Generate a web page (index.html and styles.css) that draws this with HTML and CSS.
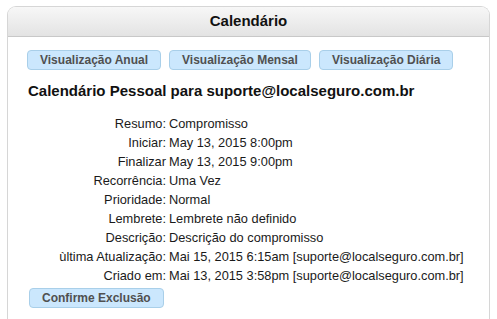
FILE: index.html
```html
<!DOCTYPE html>
<html lang="pt">
<head>
  <meta charset="UTF-8">
  <title>Calendário</title>
  <link rel="stylesheet" href="styles.css">
</head>
<body>

  <div class="panel">
    <div class="panel-header">Calendário</div>
    <div class="panel-body">
      <div class="view-buttons">
        <button class="btn">Visualização Anual</button>
        <button class="btn">Visualização Mensal</button>
        <button class="btn">Visualização Diária</button>
      </div>

      <h2 class="title">Calendário Pessoal para suporte@localseguro.com.br</h2>

      <table class="details">
        <tr><td class="key">Resumo:</td><td>Compromisso</td></tr>
        <tr><td class="key">Iniciar:</td><td>May 13, 2015 8:00pm</td></tr>
        <tr><td class="key">Finalizar</td><td>May 13, 2015 9:00pm</td></tr>
        <tr><td class="key">Recorrência:</td><td>Uma Vez</td></tr>
        <tr><td class="key">Prioridade:</td><td>Normal</td></tr>
        <tr><td class="key">Lembrete:</td><td>Lembrete não definido</td></tr>
        <tr><td class="key">Descrição:</td><td>Descrição do compromisso</td></tr>
        <tr><td class="key">ùltima Atualização:</td><td>Mai 15, 2015 6:15am [suporte@localseguro.com.br]</td></tr>
        <tr><td class="key">Criado em:</td><td>Mai 13, 2015 3:58pm [suporte@localseguro.com.br]</td></tr>
      </table>

      <button class="btn confirm">Confirme Exclusão</button>
    </div>
  </div>

</body>
</html>
```

FILE: styles.css
```css
body {
  margin: 0;
  font-family: "Liberation Sans", Arial, sans-serif;
  font-size: 13px;
  color: #1a1a1a;
  background: #fff;
  overflow: hidden;
}

.panel {
  margin: 6px 0 0 7px;
  width: 483px;
  height: 313px;
  border: 1px solid #d6d6d6;
  border-bottom: none;
  border-radius: 9px 9px 0 0;
  box-sizing: border-box;
  overflow: hidden;
}

.panel-header {
  height: 29px;
  line-height: 28px;
  text-align: center;
  font-weight: bold;
  font-size: 15px;
  color: #111;
  background: linear-gradient(#f7f7f7, #e3e3e3);
  border-bottom: 1px solid #c8c8c8;
}

.panel-body {
  padding: 13px 0 0 19px;
}

.view-buttons {
  display: flex;
  gap: 8px;
}

.btn {
  font-family: "Liberation Sans", Arial, sans-serif;
  font-size: 12px;
  font-weight: bold;
  color: #505050;
  background: #cbe7fd;
  border: 1px solid #a9cfe9;
  border-radius: 4px;
  height: 20px;
  padding: 0 12px;
  cursor: pointer;
}

.title {
  margin: 12px 0 0 1px;
  font-size: 15px;
  font-weight: bold;
  color: #111;
}

.details {
  margin-top: 15px;
  border-collapse: collapse;
  font-size: 12.8px;
}

.details td {
  padding: 0;
  height: 19px;
  line-height: 19px;
  white-space: nowrap;
}

.details .key {
  width: 139px;
  text-align: right;
  padding-right: 3px;
}

.confirm {
  margin: 3px 0 0 2px;
}
```
